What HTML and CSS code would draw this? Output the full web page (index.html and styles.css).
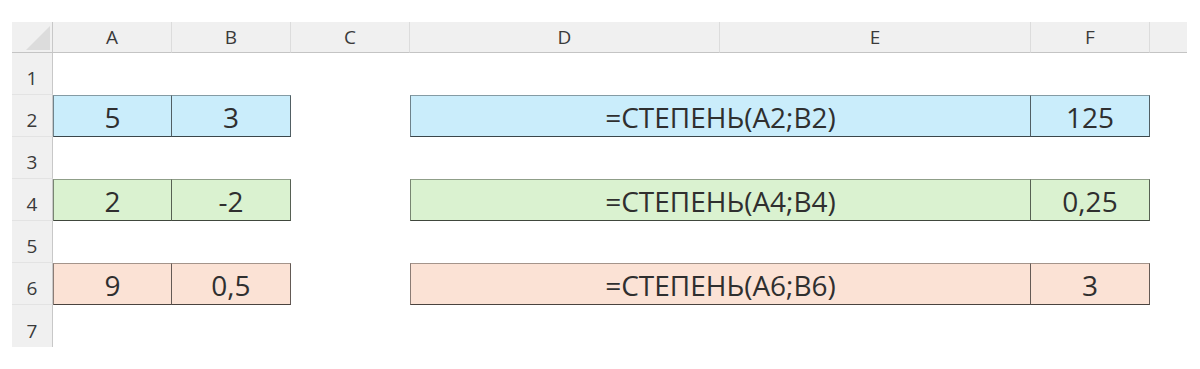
FILE: index.html
```html
<!DOCTYPE html>
<html lang="ru">
<head>
<meta charset="utf-8">
<title>СТЕПЕНЬ</title>
<link rel="stylesheet" href="styles.css">
</head>
<body>
<div class="sheet">
  <div class="colhead corner"><svg class="tri" width="24" height="24" viewBox="0 0 24 24"><polygon points="24,0 24,24 0,24" fill="#dcdcdc"/></svg></div>
  <div class="colhead">A</div>
  <div class="colhead">B</div>
  <div class="colhead">C</div>
  <div class="colhead">D</div>
  <div class="colhead">E</div>
  <div class="colhead">F</div>
  <div class="colhead tail"></div>

  <div class="rowhead">1</div>

  <div class="rowhead">2</div>
  <div class="cell blue first">5</div>
  <div class="cell blue">3</div>
  <div class="cell blue first merged">=СТЕПЕНЬ(A2;B2)</div>
  <div class="cell blue">125</div>

  <div class="rowhead">3</div>

  <div class="rowhead">4</div>
  <div class="cell green first">2</div>
  <div class="cell green">-2</div>
  <div class="cell green first merged">=СТЕПЕНЬ(A4;B4)</div>
  <div class="cell green">0,25</div>

  <div class="rowhead">5</div>

  <div class="rowhead">6</div>
  <div class="cell peach first">9</div>
  <div class="cell peach">0,5</div>
  <div class="cell peach first merged">=СТЕПЕНЬ(A6;B6)</div>
  <div class="cell peach">3</div>

  <div class="rowhead last">7</div>
</div>
</body>
</html>
```

FILE: styles.css
```css
* { box-sizing: border-box; }
html, body { margin: 0; padding: 0; background: #ffffff; }
body { font-family: "Open Sans", "Noto Sans", sans-serif; color: #333333; }

.sheet {
  margin: 22px 0 0 12px;
  display: grid;
  grid-template-columns: 41px 119px 119px 119px 310px 311px 119px 37px;
  grid-template-rows: 31px repeat(7, 42px);
  width: max-content;
}

.colhead {
  background: #f0f0f0;
  border-bottom: 1px solid #c4c4c4;
  border-right: 1px solid #dcdcdc;
  font-size: 19px;
  line-height: 30px;
  text-align: center;
  color: #3a3a3a;
}
.colhead.corner {
  border-right: 1px solid #c8c8c8;
  display: flex;
  align-items: flex-end;
  justify-content: flex-end;
  padding: 0 2px 2px 0;
}
.colhead.tail { border-right: none; }

.rowhead {
  grid-column: 1;
  background: #f0f0f0;
  border-right: 1px solid #c8c8c8;
  border-bottom: 1px solid #e3e3e3;
  font-size: 19px;
  display: flex;
  align-items: flex-end;
  justify-content: center;
  line-height: 1;
  padding-bottom: 6px;
  color: #3a3a3a;
}
.rowhead.last { border-bottom: none; }

.cell {
  font-size: 28px;
  line-height: 1;
  display: flex;
  align-items: center;
  justify-content: center;
  padding-top: 1px;
  border-top: 1px solid rgba(0, 0, 0, 0.35);
  border-right: 1px solid rgba(0, 0, 0, 0.6);
  border-bottom: 1px solid rgba(0, 0, 0, 0.7);
  color: #2f2f2f;
}
.cell.first { border-left: 1px solid rgba(0, 0, 0, 0.45); }
.cell.merged { grid-column: 5 / span 2; }

.blue { background: #caedfb; }
.green { background: #daf2d0; }
.peach { background: #fbe2d5; }
```
